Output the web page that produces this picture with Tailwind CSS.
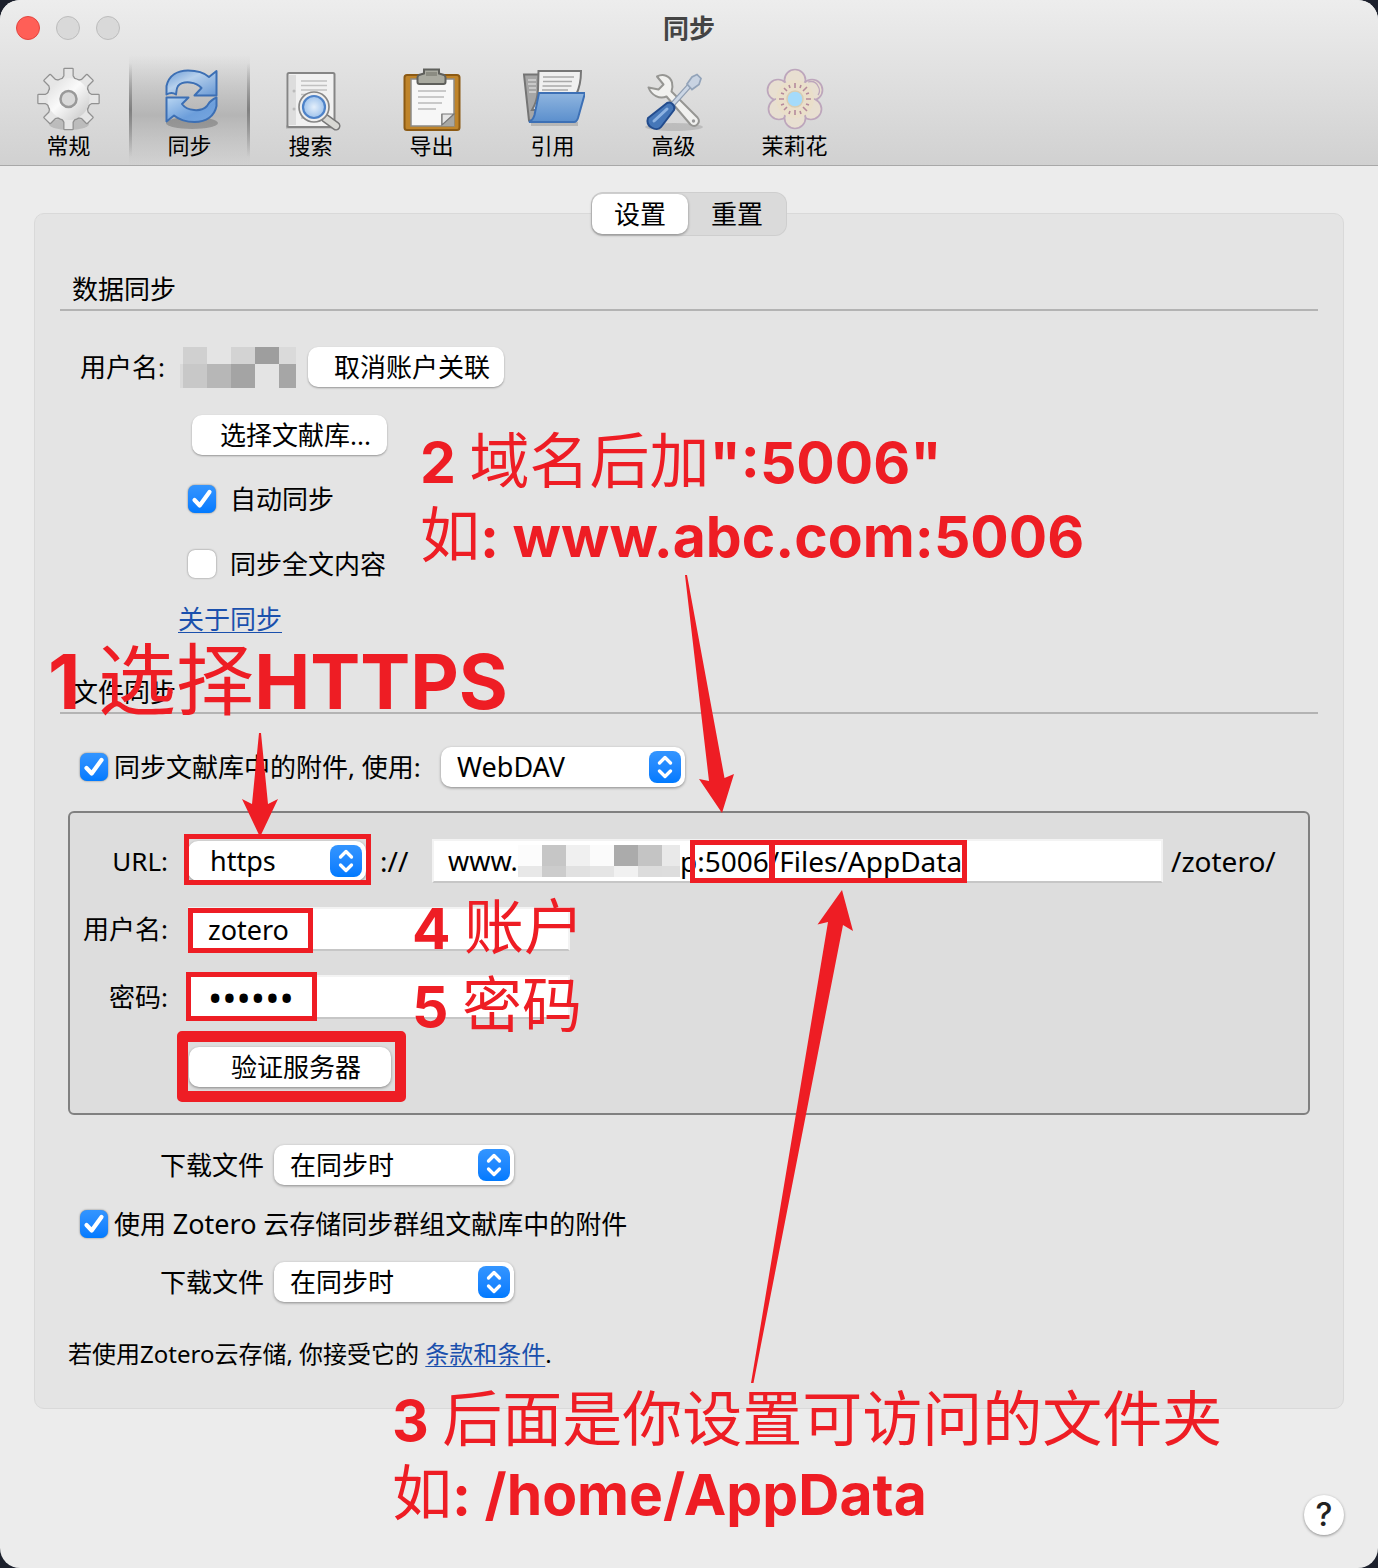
<!DOCTYPE html>
<html lang="zh-CN">
<head>
<meta charset="utf-8">
<meta name="viewport" content="width=device-width, initial-scale=1">
<title>同步</title>
<script src="https://cdn.jsdelivr.net/npm/@tailwindcss/browser@4"></script>
</head>
<body class="bg-[#1c202c] font-['Noto_Sans','Noto_Sans_CJK_SC',sans-serif] text-[26px] leading-8 text-black">
<svg class="hidden">
  <defs>
    <symbol id="chevrons" viewBox="0 0 32 32"><path d="M10.500 12 16 6.500l5.500 5.500M10.500 20 16 25.500l5.500-5.500" fill="none" stroke="#fff" stroke-width="3.300" stroke-linecap="round" stroke-linejoin="round"/></symbol>
    <symbol id="check" viewBox="0 0 28 28"><path d="M6.500 15 11.700 20.500 21.500 7" fill="none" stroke="#fff" stroke-width="4.200" stroke-linecap="round" stroke-linejoin="round"/></symbol>
  </defs>
</svg>
<div class="relative flex min-h-screen flex-col overflow-hidden rounded-[20px] bg-[#ececec]">

  <header class="border-b border-[#a8a8a8] bg-linear-to-b from-[#ededed] to-[#d1d1d1]">
    <div class="relative flex h-[55px] items-center justify-center">
      <div class="absolute left-4 flex gap-4">
        <button aria-label="关闭" class="size-6 rounded-full border border-[#e2453f] bg-[#ff5f57]"></button>
        <button aria-label="最小化" class="size-6 rounded-full border border-[#bcbcbc] bg-[#d9d9d9]"></button>
        <button aria-label="缩放" class="size-6 rounded-full border border-[#bcbcbc] bg-[#d9d9d9]"></button>
      </div>
      <h1 class="font-bold text-[#444]">同步</h1>
    </div>
    <nav class="flex h-[110px] px-2 text-[22px] leading-7">
      <button class="flex w-[121px] flex-col items-center pt-3">
        <svg class="size-16" viewBox="0 0 64 64">
          <defs>
            <linearGradient id="gear" x1="0" y1="0" x2="1" y2="1"><stop offset=".1" stop-color="#e2e2e2"/><stop offset=".45" stop-color="#fafafa"/><stop offset="1" stop-color="#c4c4c4"/></linearGradient>
            <path id="tooth" d="M25 13 27.500 9V2h8v7l2.500 4z"/>
            <g id="teeth"><use href="#tooth"/><use href="#tooth" transform="rotate(45 31.500 32)"/><use href="#tooth" transform="rotate(90 31.500 32)"/><use href="#tooth" transform="rotate(135 31.500 32)"/><use href="#tooth" transform="rotate(180 31.500 32)"/><use href="#tooth" transform="rotate(225 31.500 32)"/><use href="#tooth" transform="rotate(270 31.500 32)"/><use href="#tooth" transform="rotate(315 31.500 32)"/></g>
          </defs>
          <ellipse cx="32" cy="57" rx="20" ry="6" fill="#000" opacity=".13"/>
          <g fill="#919191" stroke="#919191" stroke-width="2.500" stroke-linejoin="round"><use href="#teeth"/><circle cx="31.500" cy="32" r="21"/></g>
          <use href="#teeth" fill="#e6e6e6"/><circle cx="31.500" cy="32" r="21" fill="url(#gear)"/>
          <circle cx="31.500" cy="32" r="8" fill="#d9d9d9" stroke="#999" stroke-width="2.500"/>
        </svg>常规</button>
      <button aria-current="page" class="relative flex w-[121px] flex-col items-center bg-linear-to-b from-transparent via-[#b5b5b5] via-55% to-transparent pt-3 before:absolute before:inset-y-2 before:left-0 before:w-[3px] before:bg-linear-to-b before:from-transparent before:via-[#808080] before:to-transparent after:absolute after:inset-y-2 after:right-0 after:w-[3px] after:bg-linear-to-b after:from-transparent after:via-[#808080] after:to-transparent">
        <svg class="size-16" viewBox="0 0 64 64">
          <defs><linearGradient id="sa" x1="0" y1="0" x2="1" y2="1"><stop offset="0" stop-color="#6b9bd5"/><stop offset=".4" stop-color="#b6d0ec"/><stop offset="1" stop-color="#6898d4"/></linearGradient>
          <linearGradient id="sb" x1="0" y1="0" x2="1" y2="1"><stop offset="0" stop-color="#b9d6f2"/><stop offset=".6" stop-color="#6c9edb"/><stop offset="1" stop-color="#78a7df"/></linearGradient></defs>
          <ellipse cx="34" cy="56" rx="26" ry="6" fill="#000" opacity=".2"/>
          <path d="M8.500 27.500V19C11 8 20 3.500 30 3.500c9 0 16 2 21 6.500l7.500-6v24.500H36.500l7-7.500c-5-6-18-8-23.500-2-1.500 2-1.500 5-2 8.500-3-2-6-2-9.500 0z" fill="url(#sa)" stroke="#3c6fb4" stroke-width="2" stroke-linejoin="round"/>
          <path d="M8.500 30.500H30.500L24 37c5 7 19 8.500 25 2 2-2.500 2-5 9.500-8.500V39c-2 10-10 16-22 16-9 0-15-2-20.500-6.500L8.500 54.500z" fill="url(#sb)" stroke="#3c6fb4" stroke-width="2" stroke-linejoin="round"/>
        </svg>同步</button>
      <button class="flex w-[121px] flex-col items-center pt-3">
        <svg class="size-16" viewBox="0 0 64 64">
          <defs><radialGradient id="lens"><stop offset="0" stop-color="#e4effb"/><stop offset="1" stop-color="#9fc3ec"/></radialGradient></defs>
          <path d="M7 60h50" stroke="#000" stroke-width="3" opacity=".2"/>
          <rect x="8.500" y="6" width="47" height="54" rx="1.500" fill="#f1f1f1" stroke="#858585" stroke-width="2"/>
          <path d="M10 8h7v50h-7z" fill="#ddd"/><g fill="#bbb"><circle cx="15" cy="24" r="1.500"/><circle cx="15" cy="42" r="1.500"/></g>
          <path d="M22 14h26M22 18.500h26M22 23h26M22 27.500h22M22 46h12M22 51h18" stroke="#c1c1c1" stroke-width="1.700"/>
          <path d="m46 51 11 8" stroke="#777" stroke-width="9" stroke-linecap="round"/><path d="m46 51 11 8" stroke="#d8d8d4" stroke-width="6" stroke-linecap="round"/>
          <circle cx="35" cy="40" r="15" fill="#eee" stroke="#858585" stroke-width="1.700"/>
          <circle cx="35" cy="40" r="11" fill="url(#lens)" stroke="#4d82c8" stroke-width="2.200"/>
        </svg>搜索</button>
      <button class="flex w-[121px] flex-col items-center pt-3">
        <svg class="size-16" viewBox="0 0 64 64">
          <rect x="4.500" y="8" width="55" height="55" rx="2.500" fill="#bf842a" stroke="#8c5a14" stroke-width="2"/>
          <path d="M11 12h43v47H11z" fill="#f7f7f7" stroke="#8c8b88" stroke-width="1.500"/>
          <path d="M54 47v12H41V47z" fill="#a7a7a4"/><path d="M42 47h12L42 58z" fill="#e5e5e5" stroke="#777" stroke-width="1.200"/>
          <path d="M18 24h28M18 30h26M18 36h24M18 42h18" stroke="#c9c9c9" stroke-width="2"/>
          <path d="M24 2.500h15v4l5 1.500q1.500 1 1.500 2.500V15q0 2-2 2h-24q-2 0-2-2v-4.500q0-1.500 1.500-2.500l5-1.500z" fill="#a9aaa0" stroke="#5f605c" stroke-width="2"/><path d="M26 5h11v4H26z" fill="#8b8c82"/>
        </svg>导出</button>
      <button class="flex w-[121px] flex-col items-center pt-3">
        <svg class="size-16" viewBox="0 0 64 64">
          <defs><linearGradient id="fold" x1="0" y1="0" x2="0" y2="1"><stop offset="0" stop-color="#8fb5df"/><stop offset="1" stop-color="#5b8fcd"/></linearGradient></defs>
          <path d="M10 57h47" stroke="#000" stroke-width="4" opacity=".15"/>
          <path d="M3 7.500h22l-11 46H8z" fill="#a6a6a6" stroke="#747474" stroke-width="2"/>
          <path d="M7 13h8M7 17h8M8 21h7M8 25h7" stroke="#d5d5d5" stroke-width="1.500"/>
          <path d="M17.500 4H60q0 14-5 24L46 43H11q5-8 6-20z" fill="#f0f0f0" stroke="#777" stroke-width="2"/>
          <path d="M22 10h31M22 14.500h29M21.500 19h29M21 23h26" stroke="#a9a9a9" stroke-width="1.700"/>
          <path d="M18 26h46l-7 25q-1.300 4-4 4H8q4-2 5.500-7z" fill="url(#fold)" stroke="#3d70b5" stroke-width="2"/>
        </svg>引用</button>
      <button class="flex w-[121px] flex-col items-center pt-3">
        <svg class="size-16" viewBox="0 0 64 64">
          <ellipse cx="32" cy="60" rx="29" ry="4" fill="#000" opacity=".12"/>
          <path d="M15 9.500c6-3 13-1 15 6 .8 3 .5 6-.5 9l26 26c4 5-2 11-7 7l-24-28c-7 3-15-1-18-9l10 2 5-5z" fill="#f1f1ef" stroke="#969693" stroke-width="2" stroke-linejoin="round"/><circle cx="51.500" cy="54" r="1.700" fill="#999"/>
          <path d="m30 38 18-20" stroke="#8f9db1" stroke-width="5.500"/><path d="m30 38 18-20" stroke="#cbd6e5" stroke-width="3"/>
          <path d="m45 17 5-7 5-2.500 4 4-2 6-7 5z" fill="#c8d3e2" stroke="#92a3b9" stroke-width="1.700"/>
          <path d="M25 36c4-2 9 3 7 7L19 60c-4 5-16 0-13-9z" fill="#4677b8" stroke="#234c8d" stroke-width="2"/><path d="m25 42-13 12" stroke="#8db3e2" stroke-width="3" stroke-linecap="round"/>
        </svg>高级</button>
      <button class="flex w-[121px] flex-col items-center pt-3">
        <svg class="size-16" viewBox="0 0 64 64">
          <g fill="#e8dfd1" stroke="#bda6bc" stroke-width="1.700"><circle cx="32" cy="13" r="10.500"/><circle cx="15" cy="23" r="10.500"/><circle cx="49" cy="23" r="10.500"/><circle cx="16" cy="42" r="10.500"/><circle cx="48" cy="42" r="10.500"/><circle cx="32" cy="51" r="10.500"/></g>
          <circle cx="32" cy="32" r="19" fill="#eadfca"/>
          <path d="M32 16v5M32 43v5M16 32h5M43 32h5M21 21l3 3M40 40l4 4M21 43l3-3M40 24l4-4M26 18l1 3M38 18l-1 3M18 26l3 1M18 38l3-1M46 26l-3 1M46 38l-3-1M26 47l1-3M38 47l-1-3" stroke="#b58a9c" stroke-width="1.600"/>
          <circle cx="32" cy="32" r="8" fill="#a4dbfb" stroke="#d9cdb2" stroke-width="1.500"/><path d="M45 15q7-2 10 4 3 5 0 9" fill="none" stroke="#bda6bc" stroke-width="1.300"/>
        </svg>茉莉花</button>
    </nav>
  </header>

  <main class="flex flex-col px-[34px] pt-[26px]">
    <div class="relative z-10 -mb-[23px] flex h-11 self-center rounded-xl border border-black/5 bg-[#dadada]">
      <button class="my-px w-24 rounded-[10px] bg-white shadow-[0_1px_3px_rgba(0,0,0,0.4)]">设置</button>
      <button class="w-[98px]">重置</button>
    </div>

    <section class="rounded-[10px] border border-[#d9d9d9] bg-[#e4e4e4] px-[25px] pt-[56px] pb-[37px]">
      <h2 class="border-b-2 border-[#b3b3b3] pl-3 leading-[39px]">数据同步</h2>
      <div class="mt-9 flex h-10 items-center pl-5">
        <span class="w-[100px]">用户名:</span>
        <div class="mr-3 grid h-[41px] grid-cols-[3px_24px_24px_24px_24px_17px] grid-rows-[17px_24px]">
          <i></i><i class="bg-[#d0d0d0]"></i><i></i><i class="bg-[#d3d3d3]"></i><i class="bg-[#9e9e9e]"></i><i class="bg-[#dadada]"></i>
          <i class="bg-[#dadada]"></i><i class="bg-[#c8c8c8]"></i><i class="bg-[#b7b7b7]"></i><i class="bg-[#a4a4a4]"></i><i></i><i class="bg-[#a6a6a6]"></i>
        </div>
        <button class="h-10 w-[196px] rounded-[10px] bg-white pl-3 shadow-[0_1px_2px_rgba(0,0,0,0.35)]">取消账户关联</button>
      </div>
      <button class="mt-7 ml-[132px] block h-10 w-[195px] rounded-[10px] bg-white pl-3 shadow-[0_1px_2px_rgba(0,0,0,0.35)]">选择文献库...</button>
      <div class="mt-[30px] ml-32 flex h-7 items-center gap-[14px]">
        <span class="relative size-7"><input id="auto" type="checkbox" checked class="peer block size-7 appearance-none rounded-[7px] bg-white shadow-[0_0_2px_rgba(0,0,0,0.5)] checked:bg-linear-to-b checked:from-[#3395ff] checked:to-[#007aff]"><svg class="pointer-events-none absolute inset-0 hidden size-7 peer-checked:block"><use href="#check"/></svg></span>
        <label for="auto">自动同步</label>
      </div>
      <div class="mt-[37px] ml-32 flex h-7 items-center gap-[14px]">
        <span class="relative size-7"><input id="full" type="checkbox" class="peer block size-7 appearance-none rounded-[7px] bg-white shadow-[0_0_2px_rgba(0,0,0,0.5)] checked:bg-linear-to-b checked:from-[#3395ff] checked:to-[#007aff]"><svg class="pointer-events-none absolute inset-0 hidden size-7 peer-checked:block"><use href="#check"/></svg></span>
        <label for="full">同步全文内容</label>
      </div>
      <div class="mt-[25px] ml-[118px] h-8"><a href="#" class="text-[#1a50ad] underline decoration-1 underline-offset-3">关于同步</a></div>

      <h2 class="mt-[38px] border-b-2 border-[#b3b3b3] pl-3 leading-[39px]">文件同步</h2>
      <div class="mt-[33px] flex h-10 items-center pl-5">
        <span class="relative mr-1.5 size-7"><input id="attach" type="checkbox" checked class="peer block size-7 appearance-none rounded-[7px] bg-white shadow-[0_0_2px_rgba(0,0,0,0.5)] checked:bg-linear-to-b checked:from-[#3395ff] checked:to-[#007aff]"><svg class="pointer-events-none absolute inset-0 hidden size-7 peer-checked:block"><use href="#check"/></svg></span>
        <label for="attach" class="w-[327px]">同步文献库中的附件, 使用:</label>
        <span class="relative h-10 w-[244px]"><select aria-label="存储方式" class="h-10 w-full appearance-none rounded-[10px] bg-white pl-4 text-[27px] shadow-[0_1px_3px_rgba(0,0,0,0.4)]"><option>WebDAV</option><option>Zotero</option></select><svg class="pointer-events-none absolute top-1 right-1 size-8 rounded-lg bg-linear-to-b from-[#3395ff] to-[#007aff]"><use href="#chevrons"/></svg></span>
      </div>

      <div class="mx-2 mt-6 rounded-md border-2 border-[#808080] bg-[#ddd] pt-[26px] pb-[26px] pl-2">
        <div class="flex h-11 items-center">
          <label for="scheme" class="mr-5 w-[90px] text-right">URL:</label>
          <span class="relative h-10 w-[178px]"><select id="scheme" class="h-10 w-full appearance-none rounded-[10px] bg-white pl-[22px] text-[27px] shadow-[0_1px_3px_rgba(0,0,0,0.4)]"><option>https</option><option>http</option></select><svg class="pointer-events-none absolute top-1 right-1 size-8 rounded-lg bg-linear-to-b from-[#3395ff] to-[#007aff]"><use href="#chevrons"/></svg></span>
          <span class="w-[66px] pl-[14px] text-[28px]">://</span>
          <div class="flex h-11 min-w-0 flex-1 items-center border-2 border-t-[#f3f3f3] border-r-[#f3f3f3] border-b-[#c6c6c6] border-l-[#f3f3f3] bg-white pl-[14px] text-[28px]">
            <span class="w-[70px] text-[27px]">www.</span>
            <div class="grid grid-cols-[24px_24px_24px_24px_24px_24px_18px] grid-rows-[21px_11px]">
              <i class="bg-[#fcfcfc]"></i><i class="bg-[#c6c6c6]"></i><i class="bg-[#f0f0f0]"></i><i class="bg-[#fbfbfb]"></i><i class="bg-[#ababab]"></i><i class="bg-[#c4c4c4]"></i><i class="bg-[#e9e9e9]"></i>
              <i class="bg-[#e8e8e8]"></i><i class="bg-[#cccccc]"></i><i class="bg-[#e1e1e1]"></i><i class="bg-[#e5e5e5]"></i><i class="bg-[#f1f1f1]"></i><i class="bg-[#dcdcdc]"></i><i class="bg-[#dddddd]"></i>
            </div>
            <input aria-label="服务器地址" value="p:5006/Files/AppData" class="h-10 w-full min-w-0 flex-1 bg-transparent">
          </div>
          <span class="w-[145px] pl-2 text-[28px]">/zotero/</span>
        </div>
        <div class="mt-6 flex h-11 items-center">
          <label for="user" class="mr-5 w-[90px] text-right">用户名:</label>
          <input id="user" value="zotero" class="h-11 w-[382px] border-2 border-t-[#f3f3f3] border-r-[#f3f3f3] border-b-[#c6c6c6] border-l-[#f3f3f3] bg-white pl-[18px] text-[27px]">
        </div>
        <div class="mt-6 flex h-11 items-center">
          <label for="pass" class="mr-5 w-[90px] text-right">密码:</label>
          <input id="pass" type="password" value="zotero" class="h-11 w-[382px] border-2 border-t-[#f3f3f3] border-r-[#f3f3f3] border-b-[#c6c6c6] border-l-[#f3f3f3] bg-white pl-[18px] text-[38px]">
        </div>
        <button class="mt-7 ml-[111px] block h-10 w-[202px] rounded-[10px] bg-white pl-3 shadow-[0_1px_3px_rgba(0,0,0,0.4)]">验证服务器</button>
      </div>

      <div class="mt-[30px] flex h-10 items-center pl-[100px]">
        <label for="dl1" class="w-[114px]">下载文件</label>
        <span class="relative h-10 w-60"><select id="dl1" class="h-10 w-full appearance-none rounded-[10px] bg-white pl-4 shadow-[0_1px_3px_rgba(0,0,0,0.4)]"><option>在同步时</option><option>在需要时</option></select><svg class="pointer-events-none absolute top-1 right-1 size-8 rounded-lg bg-linear-to-b from-[#3395ff] to-[#007aff]"><use href="#chevrons"/></svg></span>
      </div>
      <div class="mt-[25px] flex h-7 items-center gap-1.5 pl-5">
        <span class="relative size-7"><input id="group" type="checkbox" checked class="peer block size-7 appearance-none rounded-[7px] bg-white shadow-[0_0_2px_rgba(0,0,0,0.5)] checked:bg-linear-to-b checked:from-[#3395ff] checked:to-[#007aff]"><svg class="pointer-events-none absolute inset-0 hidden size-7 peer-checked:block"><use href="#check"/></svg></span>
        <label for="group">使用 <span class="text-[27px]">Zotero</span> 云存储同步群组文献库中的附件</label>
      </div>
      <div class="mt-6 flex h-10 items-center pl-[100px]">
        <label for="dl2" class="w-[114px]">下载文件</label>
        <span class="relative h-10 w-60"><select id="dl2" class="h-10 w-full appearance-none rounded-[10px] bg-white pl-4 shadow-[0_1px_3px_rgba(0,0,0,0.4)]"><option>在同步时</option><option>在需要时</option></select><svg class="pointer-events-none absolute top-1 right-1 size-8 rounded-lg bg-linear-to-b from-[#3395ff] to-[#007aff]"><use href="#chevrons"/></svg></span>
      </div>
      <p class="mt-9 mb-px pl-2 text-[24px]">若使用Zotero云存储, 你接受它的 <a href="#" class="text-[#1a50ad] underline decoration-1 underline-offset-3">条款和条件</a>.</p>
    </section>

    <button aria-label="帮助" class="mt-[86px] mb-[33px] size-10 self-end rounded-full bg-white font-['Inter',sans-serif] text-[32px] font-medium text-[#222] shadow-[0_1px_3px_rgba(0,0,0,0.4)]">?</button>
  </main>

  <!-- Tutorial annotations drawn over the window -->
  <div class="pointer-events-none absolute inset-0 z-20 font-['Inter','Noto_Sans_CJK_SC',sans-serif] text-[57px] leading-[73px] font-bold whitespace-nowrap text-[#ee1d24]">
    <p class="absolute top-[644px] left-[48px] text-[75px]">1 <span class="text-[78px] font-normal">选择</span>HTTPS</p>
    <p class="absolute top-[425px] left-[420px]">2 <span class="text-[60px] font-normal">域名后加</span>":5006"<br><span class="text-[60px] font-normal">如</span>: www.abc.com:5006</p>
    <p class="absolute top-[1383px] left-[392px]">3 <span class="text-[60px] font-normal">后面是你设置可访问的文件夹</span><br><span class="text-[60px] font-normal">如</span>: /home/AppData</p>
    <p class="absolute top-[891px] left-[412px]">4 <span class="text-[60px] font-normal">账户</span></p>
    <p class="absolute top-[969px] left-[412px]">5 <span class="text-[60px] font-normal">密码</span></p>
    <div class="absolute top-[834px] left-[184px] h-[51px] w-[187px] border-5 border-[#ee1d24]"></div>
    <div class="absolute top-[840px] left-[690px] h-[43px] w-[84px] border-5 border-[#ee1d24]"></div>
    <div class="absolute top-[840px] left-[770px] h-[43px] w-[197px] border-5 border-[#ee1d24]"></div>
    <div class="absolute top-[908px] left-[188px] h-[45px] w-[125px] border-5 border-[#ee1d24]"></div>
    <div class="absolute top-[972px] left-[186px] h-[49px] w-[131px] border-5 border-[#ee1d24]"></div>
    <div class="absolute top-[1031px] left-[177px] h-[71px] w-[229px] rounded-[5px] border-11 border-[#ee1d24]"></div>
    <svg class="absolute top-0 left-0 h-[1400px] w-[900px]" viewBox="0 0 900 1400" fill="#ee1d24">
      <path d="M259 733h2l7 71 10-5-18 38-18-38 10 5z"/>
      <path d="M685 575h2l37.500 203 9.500-4-12 39-23-34 10 2z"/>
      <path d="M751 1383h2.500L843 925l10 6-11-41-24.500 34.500L828 922z"/>
    </svg>
  </div>
</div>
</body>
</html>
